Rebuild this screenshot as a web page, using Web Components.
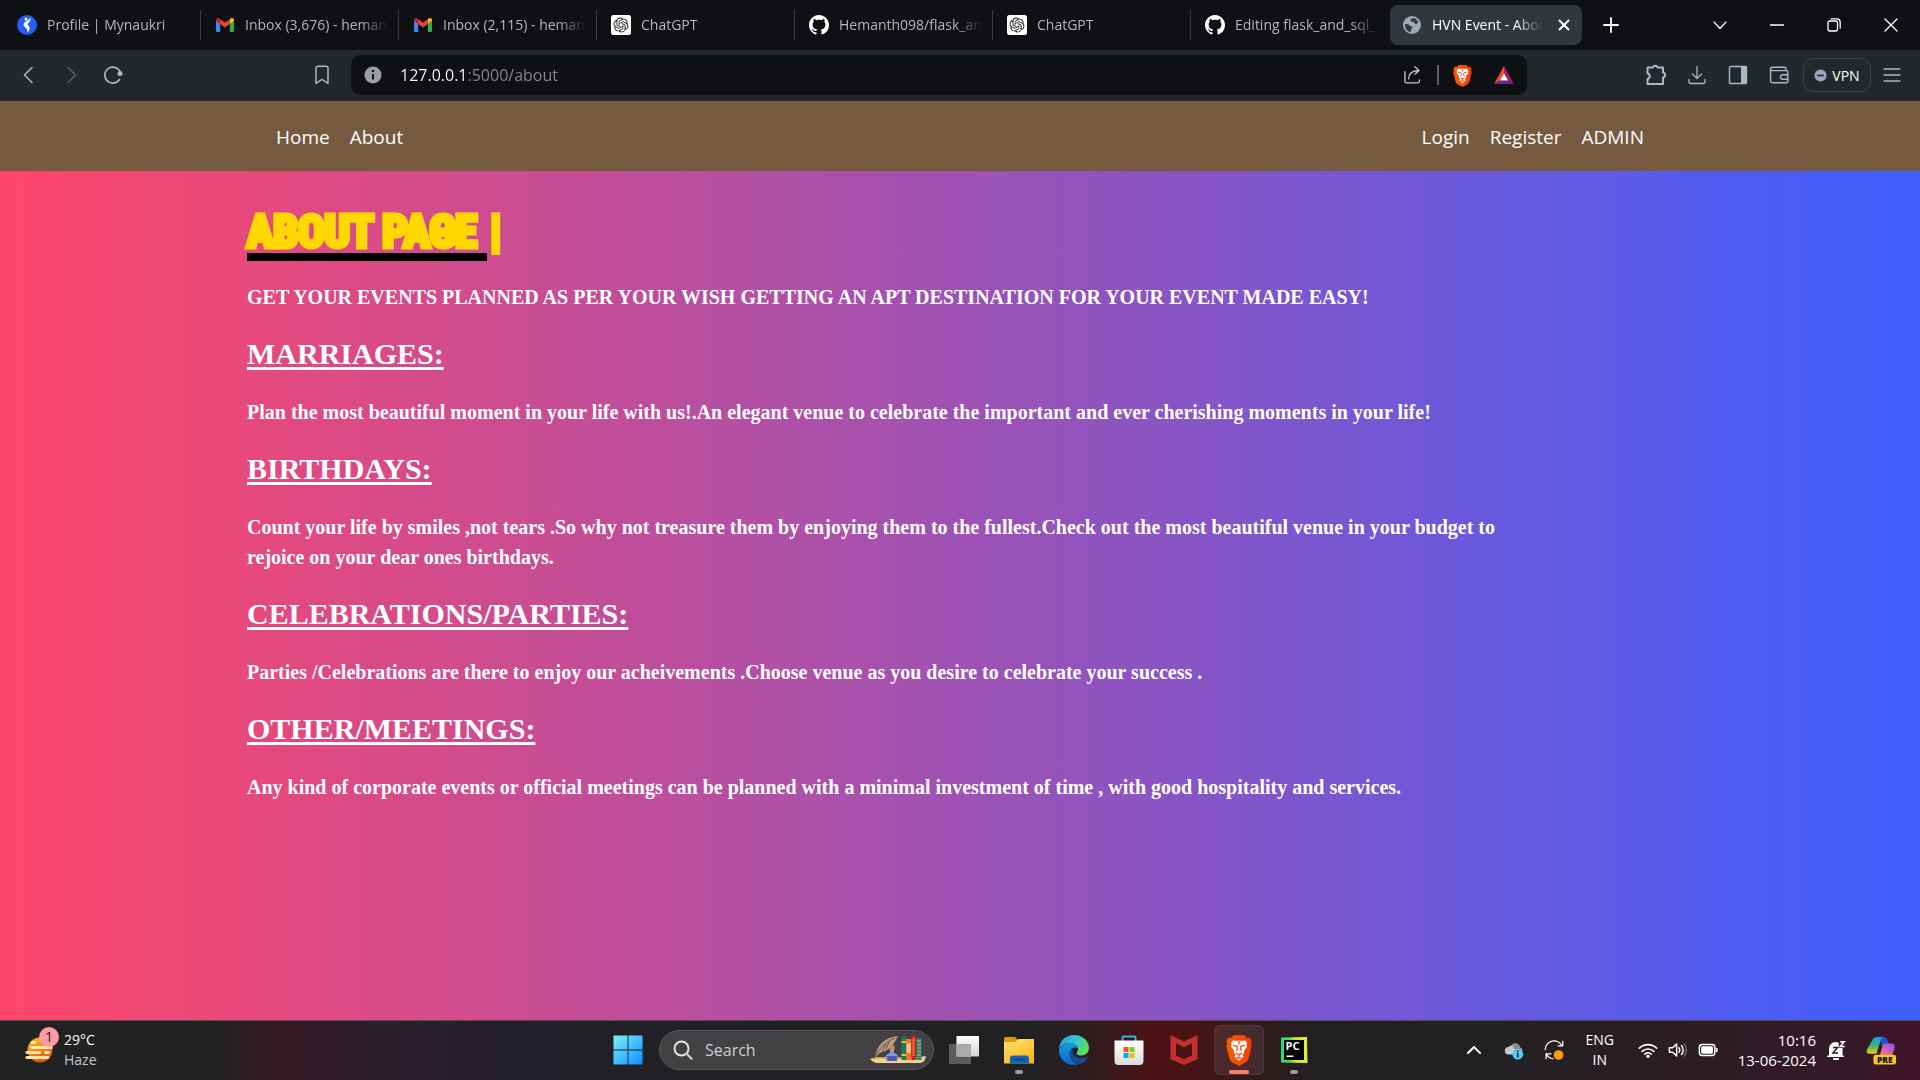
<!DOCTYPE html>
<html lang="en">
<head>
<meta charset="utf-8">
<title>HVN Event - About</title>
<style>
  html, body { margin: 0; height: 100%; }
  body { font-family: "Segoe UI", "Open Sans", "Noto Sans", sans-serif; background: #0e1014; }
  desktop-shell { min-height: 100vh; }
</style>
</head>
<body>
<desktop-shell>
  <tab-strip slot="browser">
    <browser-tab icon="naukri">Profile | Mynaukri</browser-tab>
    <browser-tab icon="gmail">Inbox (3,676) - hemanth</browser-tab>
    <browser-tab icon="gmail">Inbox (2,115) - hemanth</browser-tab>
    <browser-tab icon="chatgpt">ChatGPT</browser-tab>
    <browser-tab icon="github">Hemanth098/flask_and</browser-tab>
    <browser-tab icon="chatgpt">ChatGPT</browser-tab>
    <browser-tab icon="github" plain>Editing flask_and_sql_a</browser-tab>
    <browser-tab icon="globe" active>HVN Event - About</browser-tab>
  </tab-strip>
  <browser-toolbar slot="browser"></browser-toolbar>
  <site-nav slot="page"></site-nav>
  <about-page slot="page">
    <span slot="title">ABOUT PAGE </span>
    <span slot="lead">GET YOUR EVENTS PLANNED AS PER YOUR WISH GETTING AN APT DESTINATION FOR YOUR EVENT MADE EASY!</span>
    <event-section heading="MARRIAGES:">Plan the most beautiful moment in your life with us!.An elegant venue to celebrate the important and ever cherishing moments in your life!</event-section>
    <event-section heading="BIRTHDAYS:">Count your life by smiles ,not tears .So why not treasure them by enjoying them to the fullest.Check out the most beautiful venue in your budget to rejoice on your dear ones birthdays.</event-section>
    <event-section heading="CELEBRATIONS/PARTIES:">Parties /Celebrations are there to enjoy our acheivements .Choose venue as you desire to celebrate your success .</event-section>
    <event-section heading="OTHER/MEETINGS:">Any kind of corporate events or official meetings can be planned with a minimal investment of time , with good hospitality and services.</event-section>
  </about-page>
  <task-bar slot="taskbar"></task-bar>
</desktop-shell>

<script>
const line = (body, w = 1.5) => `<g fill="none" stroke="currentColor" stroke-width="${w}" stroke-linecap="round" stroke-linejoin="round">${body}</g>`;

const lionFace = `<path fill="#fff" d="M12 5.2l2.3.5 2.4-.6 2 2.3-.6 1.5.5 1.5-2.6 3.2.3 1.6-1.6 1.5 1 1.6L12 22l-3.7-3.7 1-1.6-1.6-1.5.3-1.6-2.6-3.2.5-1.5-.6-1.5 2-2.3 2.4.6z"/>
  <g fill="none" stroke="#fb4a12" stroke-width="1.1"><path d="M7.2 9.2l3 .6.6 2.2-.9 1.6M16.800 9.200l-3 .6-.6 2.200.9 1.600M12 5.500v3M9.500 15.600l2.500 1.300 2.500-1.300M12 17v1.500M10 19.300h4"/></g>`;

const ICONS = {
  naukri: ['0 0 20 20', `<circle cx="10" cy="10" r="10" fill="#275df5"/><circle cx="9" cy="4" r="1.500" fill="#fff"/><path fill="#fff" d="M13.500 2.500c.4 2.500-.6 4-2.500 6l-.4 1.300c1.500 1.500 2.200 2.500 2 4.200-.2 1.500-1 2.500-2.100 3.500.2-2-.3-3.200-1.600-4.500C7.500 11.600 6.500 11 6.600 9.500c.1-1.300 1-2.500 2.700-3.300C11 5.400 12.800 4.500 13.500 2.500z"/>`],
  gmail: ['0 0 20 20', `<path fill="#4285f4" d="M1 5.500l4.200 3V17H2.300A1.300 1.300 0 0 1 1 15.700z"/><path fill="#34a853" d="M19 5.500l-4.200 3V17h2.900a1.300 1.300 0 0 0 1.300-1.300z"/><path fill="#fbbc04" d="M14.800 4.200v4.700L19 5.700V5c0-1.800-2-2.700-3.300-1.600z"/><path fill="#c5221f" d="M5.200 4.200v4.700L1 5.700V5c0-1.800 2-2.700 3.300-1.600z"/><path fill="#ea4335" d="M5.200 8.900V4.100L10 7.700l4.800-3.600v4.800L10 12.500z"/>`],
  chatgpt: ['0 0 40 40', `<rect width="40" height="40" rx="5" fill="#fff"/><path transform="translate(5 5) scale(1.250)" fill="#222" d="M22.2819 9.8211a5.9847 5.9847 0 0 0-.5157-4.9108 6.0462 6.0462 0 0 0-6.5098-2.9A6.0651 6.0651 0 0 0 4.9807 4.1818a5.9847 5.9847 0 0 0-3.9977 2.9 6.0462 6.0462 0 0 0 .7427 7.0966 5.98 5.98 0 0 0 .511 4.9107 6.051 6.051 0 0 0 6.5146 2.9001A5.9847 5.9847 0 0 0 13.2599 24a6.0557 6.0557 0 0 0 5.7718-4.2058 5.9894 5.9894 0 0 0 3.9977-2.9001 6.0557 6.0557 0 0 0-.7475-7.0729zm-9.022 12.6081a4.4755 4.4755 0 0 1-2.8764-1.0408l.1419-.0804 4.7783-2.7582a.7948.7948 0 0 0 .3927-.6813v-6.7369l2.02 1.1686a.071.071 0 0 1 .038.052v5.5826a4.504 4.504 0 0 1-4.4945 4.4944zm-9.6607-4.1254a4.4708 4.4708 0 0 1-.5346-3.0137l.142.0852 4.783 2.7582a.7712.7712 0 0 0 .7806 0l5.8428-3.3685v2.3324a.0804.0804 0 0 1-.0332.0615L9.74 19.9502a4.4992 4.4992 0 0 1-6.1408-1.6464zM2.3408 7.8956a4.485 4.485 0 0 1 2.3655-1.9728V11.6a.7664.7664 0 0 0 .3879.6765l5.8144 3.3543-2.0201 1.1685a.0757.0757 0 0 1-.071 0l-4.8303-2.7865A4.504 4.504 0 0 1 2.3408 7.872zm16.5963 3.8558L13.1038 8.364 15.1192 7.2a.0757.0757 0 0 1 .071 0l4.8303 2.7913a4.4944 4.4944 0 0 1-.6765 8.1042v-5.6772a.79.79 0 0 0-.407-.667zm2.0107-3.0231l-.142-.0852-4.7735-2.7818a.7759.7759 0 0 0-.7854 0L9.409 9.2297V6.8974a.0662.0662 0 0 1 .0284-.0615l4.8303-2.7866a4.4992 4.4992 0 0 1 6.6802 4.66zM8.3065 12.863l-2.02-1.1638a.0804.0804 0 0 1-.038-.0567V6.0742a4.4992 4.4992 0 0 1 7.3757-3.4537l-.142.0805L8.704 5.459a.7948.7948 0 0 0-.3927.6813zm1.0976-2.3654l2.602-1.4998 2.6069 1.4998v2.9994l-2.5974 1.4997-2.6067-1.4997Z"/>`],
  github: ['0 0 16 16', `<path fill="#fff" d="M8 0C3.58 0 0 3.58 0 8c0 3.54 2.29 6.53 5.47 7.59.4.07.55-.17.55-.38 0-.19-.01-.82-.01-1.49-2.01.37-2.53-.49-2.69-.94-.09-.23-.48-.94-.82-1.13-.28-.15-.68-.52-.01-.53.63-.01 1.08.58 1.23.82.72 1.21 1.87.87 2.33.66.07-.52.28-.87.51-1.07-1.78-.2-3.64-.89-3.64-3.95 0-.87.31-1.59.82-2.15-.08-.2-.36-1.02.08-2.12 0 0 .67-.21 2.2.82.64-.18 1.32-.27 2-.27s1.36.09 2 .27c1.53-1.04 2.2-.82 2.2-.82.44 1.1.16 1.92.08 2.12.51.56.82 1.27.82 2.15 0 3.07-1.87 3.75-3.65 3.95.29.25.54.73.54 1.48 0 1.07-.01 1.93-.01 2.2 0 .21.15.46.55.38A8.01 8.01 0 0 0 16 8c0-4.42-3.58-8-8-8z"/>`],
  globe: ['0 0 20 20', `<circle cx="10" cy="10" r="9" fill="#a2a9ae"/><path fill="#30383d" d="M3 9c2.200.2 4 .2 4.800 1.400.5 1 2.300.6 2.600 1.800.2 1-1.200 1.400-1.400 2.600-.1 1 .2 1.700-.4 2.300C5.500 16.500 2.800 13.200 3 9zM9 4c1.200-.9 3-1 4.500-.2 1.200 1 2.400 2.200 2.800 4-1.200.5-2 1.600-3.200 1-.8-.6-.6-1.700-1.600-2-.8-.2-1.800.4-2.500-.4-.6-.8-.5-1.800 0-2.400z"/>`],
  close: ['0 0 20 20', line('<path d="M5.500 5.500l9 9M14.500 5.500l-9 9"/>', 2)],
  plus: ['0 0 20 20', line('<path d="M10 3v14M3 10h14"/>', 1.8)],
  down: ['0 0 20 20', line('<path d="M4 7l6 6.500L16 7"/>', 1.2)],
  up: ['0 0 20 20', line('<path d="M4 13l6-6 6 6"/>', 2)],
  minimise: ['0 0 20 20', line('<path d="M3.500 10h13"/>', 1.4)],
  restore: ['0 0 20 20', line('<rect x="4" y="6" width="9.500" height="10" rx="2"/><path d="M7 3.800h6A3.500 3.500 0 0 1 16.200 7v6"/>', 1.3)],
  exit: ['0 0 20 20', line('<path d="M4 4l12 12M16 4L4 16"/>', 1.3)],
  back: ['0 0 20 20', line('<path d="M13 2.500L5.500 10l7.500 7.500"/>', 1.6)],
  forward: ['0 0 20 20', line('<path d="M7 2.500l7.500 7.500L7 17.500"/>', 1.6)],
  reload: ['0 0 20 20', line('<path d="M16.500 14.500A8 8 0 1 1 17.500 8"/>', 1.6) + '<circle cx="17" cy="8.500" r="2.500" fill="currentColor"/>'],
  bookmark: ['0 0 20 20', line('<path d="M4 18.500V3a1.800 1.800 0 0 1 1.800-1.800h8.400A1.800 1.800 0 0 1 16 3v15.500l-6-4.200z"/>', 1.5)],
  info: ['0 0 20 20', `<circle cx="10" cy="10" r="8.500" fill="#9b9fa4"/><path d="M10 9v5.500" stroke="#0e1014" stroke-width="2"/><circle cx="10" cy="6" r="1.300" fill="#0e1014"/>`],
  share: ['0 0 24 24', line('<path d="M3.500 8v11.500a2 2 0 0 0 2 2h13.500a2 2 0 0 0 2-2V18M8 16.500c0-6 4-9.500 12-10M15.500 2l5 4.500-5 4.500"/>', 1.6)],
  brave: ['0 0 24 26', `<defs><linearGradient id="b"><stop stop-color="#fa5b00"/><stop offset="1" stop-color="#fb3b0a"/></linearGradient></defs><path fill="url(#b)" d="M7.500 1h9l2 2.300 2-.4 1.800 2.800-.6 2 .6 2.300-2.600 10.500-1.600 2L12 26l-6.100-3.500-1.600-2L1.700 10l.6-2.300-.6-2 1.800-2.800 2 .4z"/>${lionFace}`],
  bat: ['0 0 22 20', `<path fill="#ff4724" d="M11 0L0 20l6.500-4L11 8.500z"/><path fill="#9e1f63" d="M11 0l11 20-6.500-4L11 8.500z"/><path fill="#662d91" d="M0 20h22l-6.500-4h-9z"/><path fill="#fff" d="M11 8l4.500 8h-9z"/>`],
  puzzle: ['0 0 22 22', line('<path d="M2.500 3.500H8c.5-2.500 4-2.500 4.500 0H18v5c3 .5 3 4.500 0 5v6.500H2.500V15c3-.5 3-5 0-5.500z"/>', 2)],
  download: ['0 0 20 20', line('<path d="M10 1.500v11.500M5.500 9L10 13.500 14.500 9M2 14.500v2a2 2 0 0 0 2 2h12a2 2 0 0 0 2-2v-2"/>', 1.3)],
  sidebar: ['0 0 20 20', line('<rect x="1.500" y="1.500" width="17" height="17" rx="1"/>', 1.4) + '<path fill="currentColor" d="M13 1h6v18h-6z"/>'],
  wallet: ['0 0 20 20', line('<path d="M17 5.500V4a1.800 1.800 0 0 0-1.800-1.800H3.300a1.700 1.700 0 0 0 0 3.400h13.900A1.600 1.600 0 0 1 18.800 7.200v9a1.600 1.600 0 0 1-1.600 1.600H3.400a1.800 1.800 0 0 1-1.800-1.800V4M18.500 9.800h-4.800a2.200 2.200 0 0 0 0 4.400h4.800"/>', 1.4)],
  vpn: ['0 0 14 14', '<circle cx="7" cy="7" r="6.500" fill="#a1a1bb"/><path d="M3.500 7h7" stroke="#22282b" stroke-width="1.800"/>'],
  menu: ['0 0 20 20', line('<path d="M2 4h16M2 10h16M2 16h16"/>', 1.4)],
  haze: ['0 0 28 28', `<defs><linearGradient id="h" x1="0" y1="0" x2=".4" y2="1"><stop stop-color="#fcc419"/><stop offset="1" stop-color="#e8590c"/></linearGradient></defs><circle cx="15" cy="14" r="12.500" fill="url(#h)"/><g stroke="#f7e2a8" stroke-width="2.800" stroke-linecap="round"><path d="M7 6.500h3M6.500 11.500h20M1.800 16.500h13M20.500 16.500h3M1.800 21.500h21"/></g>`],
  windows: ['0 0 30 30', `<defs><linearGradient id="w" gradientUnits="userSpaceOnUse" x1="0" y1="0" x2="30" y2="30"><stop stop-color="#7df3ff"/><stop offset="1" stop-color="#0b8cff"/></linearGradient></defs><path fill="url(#w)" d="M1 .5h13.600v14H.5V1zM15.500.5H29l.5.500v13.500h-14zM.5 15.500h14.100v14H1l-.5-.5zM15.500 15.500h14V29l-.5.500H15.500z"/>`],
  search: ['0 0 20 20', '<circle cx="8.500" cy="8.500" r="7" fill="none" stroke="#e3e3e5" stroke-width="2"/><path d="M13.500 13.500l5 5.300" stroke="#c9c9cc" stroke-width="2.300" stroke-linecap="round"/>'],
  library: ['0 0 56 30', `<path fill="#f3d289" d="M0 24l6-2h44l6-1c-1 5-3 7-7 7H8c-4 0-6-2-8-4z"/><path fill="#c99b4c" d="M7 22h44v1.500H5z"/>
    <path fill="#b89a80" d="M5 22C7 12 12 3 28 1c-3 5-5 12-14 15.500L10 18c-2 1-3 3-4 4z"/><path fill="none" stroke="#6b5344" d="M4 24C9 13 16 7 25 3M12 17l4-8M16 14l3-7"/>
    <path fill="#c98d58" d="M19.500 10.500h5V15h-5z"/><path fill="#8b97dc" d="M20 15h4v3c4 1 5 3 3.500 8h-11C15 21 16 19 20 18z"/><path fill="#4d58b0" d="M17 21h10l-.5 5h-9z"/>
    <path fill="#1c7a53" d="M31.500 1H36v24h-4.500z"/><path fill="#e9b95c" d="M31.500 6H36v2h-4.500zM31.500 19H36v2h-4.500z"/><path fill="#ef7424" d="M36 4h5.500v21H36z"/><path fill="#f7c48c" d="M36.800 8h4v10h-4z"/><path fill="#c9271e" d="M41.500.5h4.500V25h-4.500z"/><path fill="#f06a43" d="M42.500 3h2v18h-2z"/><path fill="#2f8277" d="M46.500 3.500l5-.5v22h-5z"/><path stroke="#d5bd62" stroke-dasharray="2 1.500" d="M48 5v18M50 5v18"/>`],
  taskview: ['0 0 32 32', `<defs><linearGradient id="t" x2="0" y2="1"><stop stop-color="#fff"/><stop offset="1" stop-color="#d4d4d4"/></linearGradient></defs><path fill="#5c5c5d" d="M1 10h22v20H1z"/><path fill="url(#t)" d="M8.500 2H31v20.500H8.500z"/><path fill="#aaa" d="M8.500 10H23v12.500H8.500z"/>`],
  folder: ['0 0 32 32', `<defs><linearGradient id="f" x2=".6" y2="1"><stop stop-color="#ffe07a"/><stop offset="1" stop-color="#fbb91a"/></linearGradient></defs><path fill="#dd9a05" d="M1 4.500C1 3 2 3 3 3h9l3 3-3 4H1z"/><path fill="url(#f)" d="M1 8h11l3.500-3H31v24.500H1z"/><path fill="#1266b4" d="M7 29.500v-5c0-2 1-3 3-3h13c2 0 3 1 3 3v5z"/><path stroke="#0a3f7d" stroke-width="1.500" d="M10 25.500h13"/>`],
  edge: ['0 0 32 32', `<defs><linearGradient id="e1" x1="0" y1=".2" x2="1" y2=".5"><stop stop-color="#23a8e8"/><stop offset=".6" stop-color="#35c8c4"/><stop offset="1" stop-color="#66de4e"/></linearGradient><linearGradient id="e2" x2="0" y2="1"><stop stop-color="#1b98e0"/><stop offset="1" stop-color="#0568c6"/></linearGradient></defs>
    <path fill="url(#e1)" d="M1 15C1.500 6.500 8 1 16 1c9 0 15 6.500 15 13 0 4.500-3.500 7.500-7.500 7.500-4 0-5-1.500-5-2.500 0-.8 1.500-1.500 1.500-4 0-3.500-4-6-8.500-6C6 9 2.500 11.500 1 15z"/><path fill="url(#e2)" d="M1 15.500C2.500 11.500 7 9 11.500 9c5 0 8.500 2.500 8.500 5-7.500-2.500-9 3.500-8 8 1.200 5 5 8 9 8.200C10 33.500.500 26 1 15.500z"/><path fill="#124f9c" d="M12.500 15C10 21 14 29.500 21.500 30c4-1 7-4 8.500-7.500-6 3-14.500 1.500-15.500-4.500-.1-1.300 0-2.300.5-3.500z"/>`],
  store: ['0 0 32 32', `<defs><linearGradient id="s" x2="0" y2="1"><stop stop-color="#fff"/><stop offset="1" stop-color="#d9dbde"/></linearGradient></defs><path fill="none" stroke="#2fb4ee" stroke-width="2" d="M9.500 8V3.500a1 1 0 0 1 1-1h11a1 1 0 0 1 1 1V8"/><path fill="url(#s)" d="M1.500 6.500h29V27a4 4 0 0 1-4 4h-21a4 4 0 0 1-4-4z"/><path fill="#f1511b" d="M10.500 13h5v5h-5z"/><path fill="#80cc28" d="M16.500 13h5v5h-5z"/><path fill="#00adef" d="M10.500 19h5v5h-5z"/><path fill="#fbbc09" d="M16.500 19h5v5h-5z"/>`],
  mcafee: ['0 0 32 32', `<path fill="#c32d2f" d="M2.500 1L16 7.500 29.500 1v24L16 31 2.500 25zM8 9.500v12l8 3.800 8-3.800v-12l-8 3.800z"/>`],
  pycharm: ['0 0 32 32', `<defs><linearGradient id="p"><stop stop-color="#21d789"/><stop offset=".3" stop-color="#4be03c"/><stop offset=".6" stop-color="#e8e826"/><stop offset="1" stop-color="#d9ef3c"/></linearGradient></defs><path fill="url(#p)" d="M3 3.500L29 3l.5 26L3 28.500z"/><path fill="#000" d="M6 6h20v20H6z"/><text x="7.500" y="16" font-family="Open Sans, sans-serif" font-size="11" font-weight="700" fill="#fff">PC</text><path fill="#fff" d="M8.500 21.500h7V23h-7z"/>`],
  cloud: ['0 0 24 24', `<path fill="#8f8f8f" d="M7 12c0-5 3-8 6.500-8S19 6.500 19.500 9c2 .5 3 2 3 4z"/><path fill="#c9c9c9" d="M5.500 17.500a4.500 4.500 0 0 1 0-9C7 6 11 6.500 12 9.500l4 8z"/><circle cx="16.500" cy="17" r="6.500" fill="#5ac8fa"/><path fill="#123" d="M15.500 15.500h2v5.500h-2zM15.500 12.500h2v2h-2z"/>`],
  sync: ['0 0 24 24', line('<path d="M1.500 11.500A10.500 10.500 0 0 1 21.500 7M22.500 1.500V7H17M8.500 16.500H2.500V22.500M2.500 16.500a10.500 10.500 0 0 0 8.500 6"/>', 1.5) + '<circle cx="17.500" cy="18" r="5.800" fill="#f99b0c"/>'],
  wifi: ['0 0 22 20', line('<path d="M1.500 8a13.500 13.500 0 0 1 19 0M4.500 11.500a9.500 9.500 0 0 1 13 0M7.500 14.500a5.300 5.300 0 0 1 7 0"/>', 1.8) + '<circle cx="11" cy="16.800" r="1.900" fill="currentColor"/>'],
  sound: ['0 0 22 20', line('<path d="M1.500 7.500h3.500l4.500-4v13L5 12.500H1.500zM12 7.500a4 4 0 0 1 0 5M14.800 5a7.500 7.500 0 0 1 0 10"/>', 1.6) + '<path d="M17.600 3a11 11 0 0 1 0 14" fill="none" stroke="#777" stroke-width="1.500"/>'],
  battery: ['0 0 22 20', line('<rect x="1.500" y="4" width="17" height="12" rx="3"/>', 1.6) + '<rect x="3.500" y="6" width="13" height="8" rx="1.500" fill="#fff"/><path d="M20.500 8.500v3" stroke="#fff" stroke-width="2" stroke-linecap="round"/>'],
  bell: ['0 0 20 20', `<path fill="#fff" d="M3 15V8.500A6.500 6.500 0 0 1 9.500 2c1.200 0 2.300.3 3.200.8V8H16.500v7l1.500 1v1H1v-1zM7 18h6a3 3 0 0 1-6 0z"/><path fill="none" stroke="#2b1d24" stroke-width="1.500" d="M7 7.500h4.500l-4.500 5.500h5"/><path fill="none" stroke="#fff" stroke-width="1.500" d="M14.200 1.800h4l-4 4.700h4.500"/>`],
  copilot: ['0 0 32 32', `<defs><linearGradient id="c1" x2="0" y2="1"><stop stop-color="#1b9bea"/><stop offset=".5" stop-color="#2fb67c"/><stop offset="1" stop-color="#f0d000"/></linearGradient><linearGradient id="c2" x1="1" x2="0" y2="1"><stop stop-color="#9b4ff0"/><stop offset="1" stop-color="#ff7a6b"/></linearGradient></defs>
    <path fill="#1a55d8" d="M15 2h5c2 0 3 3 4 7l-7 3z"/><path fill="url(#c1)" d="M7 5c.8-2 2-3 4-3h8c-2 .5-3 2-3.500 4L11 20H4c-3 0-4-2-3-4.500z"/><path fill="url(#c2)" d="M22 9h5c3 0 4 2 3.500 5L27 24H14l3.500-12c.5-2 2-3 4.500-3z"/><rect x="8" y="21" width="24" height="10.500" rx="2.500" fill="#fcc419"/><text x="20" y="29.500" text-anchor="middle" font-family="Open Sans, sans-serif" font-size="9" font-weight="800" fill="#111">PRE</text>`]
};

/* Base class: clones a template built from the element's own markup. */
class Part extends HTMLElement {
  constructor() {
    super();
    this.attachShadow({ mode: 'open' });
  }
  connectedCallback() {
    const t = document.createElement('template');
    t.innerHTML = `<style>
      * { box-sizing: border-box; }
      button { font: inherit; color: inherit; background: none; border: 0; padding: 0; display: flex; align-items: center; justify-content: center; }
      a { color: inherit; text-decoration: none; }
    </style>` + this.render();
    this.shadowRoot.replaceChildren(t.content.cloneNode(true));
  }
}

customElements.define('ui-icon', class extends Part {
  render() {
    const [box, body] = ICONS[this.getAttribute('name')];
    return `<style>:host { display: block; flex: none; width: var(--size, 20px); height: var(--size, 20px); } svg { display: block; width: 100%; height: 100%; }</style>
      <svg viewBox="${box}" aria-hidden="true">${body}</svg>`;
  }
});

customElements.define('desktop-shell', class extends Part {
  render() {
    return `<style>
      :host { display: flex; flex-direction: column; }
      .page { flex: 1; display: flex; flex-direction: column; background: linear-gradient(to right, #ff4669, #3d5efe); }
    </style>
    <header><slot name="browser"></slot></header>
    <div class="page"><slot name="page"></slot></div>
    <slot name="taskbar"></slot>`;
  }
});

customElements.define('tab-strip', class extends Part {
  render() {
    return `<style>
      :host { display: flex; align-items: center; height: 50px; background: #0e1014; color: #fff; padding: 0 1px 0 3px; }
      .tabs { display: flex; min-width: 0; }
      .new { width: 58px; height: 40px; }
      .window { display: flex; margin-left: auto; }
      .window button { width: 57px; height: 40px; }
    </style>
    <div class="tabs" role="tablist"><slot></slot></div>
    <button class="new" aria-label="New tab"><ui-icon name="plus"></ui-icon></button>
    <div class="window">
      <button aria-label="Search tabs"><ui-icon name="down"></ui-icon></button>
      <button aria-label="Minimise"><ui-icon name="minimise"></ui-icon></button>
      <button aria-label="Restore"><ui-icon name="restore"></ui-icon></button>
      <button aria-label="Close"><ui-icon name="exit"></ui-icon></button>
    </div>`;
  }
});

customElements.define('browser-tab', class extends Part {
  render() {
    const active = this.hasAttribute('active');
    return `<style>
      :host { display: flex; align-items: center; flex: 0 1 auto; width: 198px; box-sizing: border-box; min-width: 0; height: 40px; padding: 0 0 0 14px; color: #b4b6b9; font-size: 14px; }
      :host([active]) { width: 192px; margin-left: 1px; padding: 0 8px 0 12px; border-radius: 8px; background: #30383d; color: #fff; }
      .tab { flex: 1; min-width: 0; gap: 10px; justify-content: flex-start; text-align: left; height: 30px; padding-right: 10px; border-right: 1px solid #3a3d41; }
      :host([active]) .tab, :host([plain]) .tab { border-color: transparent; }
      .text { flex: 1; min-width: 0; overflow: hidden; white-space: nowrap; line-height: 20px; mask-image: linear-gradient(to left, transparent, #000 28px); }
      ui-icon { --size: 20px; }
    </style>
    <button class="tab" role="tab" aria-selected="${active}"><ui-icon name="${this.getAttribute('icon')}"></ui-icon><span class="text"><slot></slot></span></button>
    ${active ? '<button aria-label="Close tab"><ui-icon name="close"></ui-icon></button>' : ''}`;
  }
});

customElements.define('browser-toolbar', class extends Part {
  render() {
    return `<style>
      :host { display: flex; align-items: center; box-sizing: border-box; height: 51px; padding: 0 8px 1px; background: #22282b; color: #a9bac3; }
      button { width: 42px; height: 40px; }
      .dim { color: #586066; }
      .mark { margin-left: auto; }
      .left { display: flex; flex: 0 0 335px; }
      .address { flex: 1; display: flex; align-items: center; height: 40px; margin-left: 8px; padding: 0 2px 0 12px; border-radius: 10px; background: #0e1014; color: #c3c6c9; }
      input { flex: 1; min-width: 0; margin-left: 17px; padding: 0; border: 0; outline: 0; font: inherit; font-size: 16px; line-height: 24px; color: transparent; background: linear-gradient(to right, #fff 67px, #85888c 67px); background-clip: text; -webkit-background-clip: text; }
      .rule { width: 2px; height: 20px; background: #5d6063; margin: 0 2px 0 4px; }
      .right { display: flex; align-items: center; margin-left: 108px; }
      .vpn { width: 68px; height: 34px; gap: 5px; margin-left: 4px; border: 1px solid #3b4549; border-radius: 10px; color: #fff; font-size: 14px; }
      .vpn ui-icon { --size: 13px; }
      ui-icon { --size: 20px; }
      .brave { --size: 23px; }
      .puzzle { --size: 22px; }
      .right button:not(.vpn) { width: 41px; }
    </style>
    <div class="left">
      <button aria-label="Back"><ui-icon name="back"></ui-icon></button>
      <button class="dim" aria-label="Forward"><ui-icon name="forward"></ui-icon></button>
      <button aria-label="Reload"><ui-icon name="reload"></ui-icon></button>
      <button class="mark" aria-label="Bookmark"><ui-icon name="bookmark"></ui-icon></button>
    </div>
    <div class="address">
      <ui-icon name="info"></ui-icon>
      <input type="text" aria-label="Address" value="127.0.0.1:5000/about">
      <button aria-label="Share"><ui-icon name="share"></ui-icon></button>
      <span class="rule"></span>
      <button aria-label="Brave Shields"><ui-icon class="brave" name="brave"></ui-icon></button>
      <button aria-label="Rewards"><ui-icon name="bat"></ui-icon></button>
    </div>
    <div class="right">
      <button aria-label="Extensions"><ui-icon class="puzzle" name="puzzle"></ui-icon></button>
      <button aria-label="Downloads"><ui-icon name="download"></ui-icon></button>
      <button aria-label="Sidebar"><ui-icon name="sidebar"></ui-icon></button>
      <button aria-label="Wallet"><ui-icon name="wallet"></ui-icon></button>
      <button class="vpn"><ui-icon name="vpn"></ui-icon>VPN</button>
      <button aria-label="Menu"><ui-icon name="menu"></ui-icon></button>
    </div>`;
  }
});

customElements.define('site-nav', class extends Part {
  render() {
    return `<style>
      :host { display: block; background: #755a40; color: #fff; }
      nav { display: flex; justify-content: space-between; max-width: 1424px; margin: 0 auto; padding: 21px 18px 19px; }
      div { display: flex; }
      a { padding: 0 10px; font-size: 19px; line-height: 30px; }
    </style>
    <nav><div><a href="#home">Home</a><a href="#about">About</a></div>
    <div><a href="#login">Login</a><a href="#register">Register</a><a href="#admin">ADMIN</a></div></nav>`;
  }
});

customElements.define('about-page', class extends Part {
  render() {
    return `<style>
      :host { display: block; flex: 1; width: 100%; max-width: 1426px; margin: 0 auto; box-sizing: border-box; padding: 31px 150px 30px 0; color: #fff; font-family: "Times New Roman", "Liberation Serif", serif; font-weight: 700; }
      h1 { margin: 0 0 20px; font: 700 44px/60px Impact, "Roboto Condensed", Roboto, "Liberation Sans", sans-serif; color: #ffd800; -webkit-text-stroke: 5px #ffd800; white-space: pre; }
      .line { margin-right: 3px; text-decoration: underline 8px #000; text-underline-offset: 6px; text-decoration-skip-ink: none; }
      .lead { margin: 0; font-size: 20px; line-height: 30px; }
    </style>
    <h1><span class="line"><slot name="title"></slot></span>|</h1>
    <p class="lead"><slot name="lead"></slot></p>
    <slot></slot>`;
  }
});

customElements.define('event-section', class extends Part {
  render() {
    return `<style>
      :host { display: block; margin-top: 24px; }
      h2 { margin: 0 0 25px; font-size: 30px; line-height: 36px; text-decoration: underline 3px; text-underline-offset: 3px; text-decoration-skip-ink: none; }
      p { margin: 0; font-size: 20px; line-height: 30px; }
    </style>
    <h2>${this.getAttribute('heading')}</h2><p><slot></slot></p>`;
  }
});

customElements.define('task-bar', class extends Part {
  render() {
    const app = (icon, label, cls = '') => `<button class="app ${cls}" aria-label="${label}"><ui-icon name="${icon}"></ui-icon></button>`;
    return `<style>
      :host { display: grid; grid-template-columns: 1fr auto 1fr; align-items: center; height: 60px; padding-bottom: 1px; border-top: 1px solid #55504f; box-sizing: border-box; color: #fff; font-size: 14px; line-height: 20px;
        background: linear-gradient(to right, #202224 0, #202224 11%, #371a25 14.500%, #2b1f2a 20%, #231f2a 26%, #202124 35%, #212124 54%, #301c20 57%, #4b1113 60%, #471315 62%, #221f22 68%, #202224 76%, #2a1d23 86%, #341a27 96%, #421529 100%); }
      .weather { justify-self: start; margin-left: 25px; gap: 11px; text-align: left; }
      .weather .pic { position: relative; --size: 28px; }
      .badge { position: absolute; right: -6px; top: -9px; width: 20px; height: 20px; border-radius: 50%; background: #ff99a4; color: #222; text-align: center; }
      .grey { color: #c5c5c6; }
      .mid { display: flex; align-items: center; }
      .app { position: relative; width: 50px; height: 50px; margin-left: 5px; border-radius: 6px; --size: 32px; }
      .start { --size: 30px; margin: 0; width: 30px; }
      .search { display: flex; align-items: center; gap: 12px; width: 275px; height: 40px; margin: 0 0 0 16px; padding: 0 7px 0 13px; border: 1px solid #58575a; border-radius: 20px; background: #414043; }
      .search input { flex: 1; min-width: 0; padding: 0; border: 0; outline: 0; background: none; font: inherit; font-size: 16px; color: #fff; }
      .search input::placeholder { color: #cfcfd0; opacity: 1; }
      .search .books { --size: 56px; height: 30px; }
      .open::after { content: ""; position: absolute; bottom: 1px; left: 50%; width: 8px; height: 4px; margin-left: -4px; border-radius: 2px; background: #9b9b9d; }
      .current { background: #ffffff14; box-shadow: inset 0 0 0 1px #ffffff12; }
      .current::after { width: 20px; margin-left: -10px; background: #f47f64; }
      .last { margin-right: -12px; }
      .tray { justify-self: end; display: flex; align-items: center; padding-right: 24px; }
      .tray button { --size: 20px; }
      .tray .small { width: 40px; }
      .tray .status { gap: 10px; padding: 0 20px 0 12px; }
      .lang { width: 52px; flex-direction: column; }
      .clock { text-align: right; margin-right: 10px; font-size: 15px; }
      .pilot ui-icon { --size: 30px; } .pilot { margin-left: 20px; }
    </style>
    <button class="weather"><span class="pic"><ui-icon name="haze"></ui-icon><span class="badge">1</span></span><span>29°C<br><span class="grey">Haze</span></span></button>
    <div class="mid">
      ${app('windows', 'Start', 'start')}
      <label class="search"><ui-icon name="search"></ui-icon><input type="text" aria-label="Search" placeholder="Search"><ui-icon class="books" name="library"></ui-icon></label>
      ${app('taskview', 'Task view')}${app('folder', 'File Explorer', 'open')}${app('edge', 'Edge')}${app('store', 'Store')}${app('mcafee', 'McAfee')}${app('brave', 'Brave', 'open current')}${app('pycharm', 'PyCharm', 'open last')}
    </div>
    <div class="tray">
      <button class="small" aria-label="Hidden icons"><ui-icon name="up"></ui-icon></button>
      <button class="small" aria-label="OneDrive"><ui-icon name="cloud"></ui-icon></button>
      <button class="small" aria-label="Update"><ui-icon name="sync"></ui-icon></button>
      <button class="lang"><span>ENG</span><span>IN</span></button>
      <button class="status" aria-label="Network, sound, battery"><ui-icon name="wifi"></ui-icon><ui-icon name="sound"></ui-icon><ui-icon name="battery"></ui-icon></button>
      <button class="clock"><span>10:16<br>13-06-2024</span></button>
      <button aria-label="Notifications"><ui-icon name="bell"></ui-icon></button>
      <button class="pilot" aria-label="Copilot"><ui-icon name="copilot"></ui-icon></button>
    </div>`;
  }
});
</script>
</body>
</html>
